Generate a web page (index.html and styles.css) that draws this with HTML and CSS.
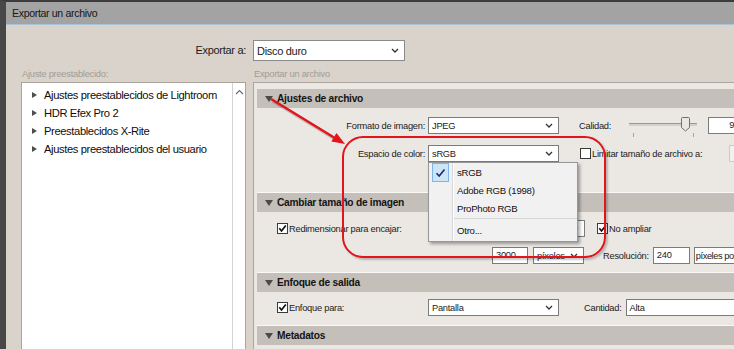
FILE: index.html
```html
<!DOCTYPE html>
<html lang="es">
<head>
<meta charset="UTF-8">
<title>Exportar un archivo</title>
<link rel="stylesheet" href="styles.css">
</head>
<body>
<div class="page">
  <div class="window">
    <div class="title-bar">Exportar un archivo</div>
    <div class="dialog">
      <div class="dest-label">Exportar a:</div>
      <div class="select dest-select">
        <span>Disco duro</span>
        <svg class="chev" width="8" height="5" viewBox="0 0 8 5"><path d="M1 1 L4 4 L7 1" fill="none" stroke="#333" stroke-width="1.3"/></svg>
      </div>

      <div class="group-label">Ajuste preestablecido:</div>
      <div class="group-label">Exportar un archivo</div>

      <div class="preset-list">
        <ul>
          <li>Ajustes preestablecidos de Lightroom</li>
          <li>HDR Efex Pro 2</li>
          <li>Preestablecidos X-Rite</li>
          <li>Ajustes preestablecidos del usuario</li>
        </ul>
        <div class="scrollbar">
          <svg class="scroll-up" width="9" height="6" viewBox="0 0 9 6"><path d="M1 5 L4.5 1.5 L8 5" fill="none" stroke="#6d6d6d" stroke-width="1.2"/></svg>
        </div>
      </div>

      <div class="settings">
        <div class="section-head"><span class="tri"></span>Ajustes de archivo</div>
        <div class="section-body body-file">
          <div class="row">
            <div class="row-label">Formato de imagen:</div>
            <div class="select w131">
              <span>JPEG</span>
              <svg class="chev" width="8" height="5" viewBox="0 0 8 5"><path d="M1 1 L4 4 L7 1" fill="none" stroke="#333" stroke-width="1.3"/></svg>
            </div>
            <div class="text quality-label">Calidad:</div>
            <div class="slider">
              <div class="track"></div>
              <svg class="thumb" width="9" height="15" viewBox="0 0 9 15"><path d="M0.5 1.5 Q0.5 0.5 1.5 0.5 L7.5 0.5 Q8.5 0.5 8.5 1.5 L8.5 10.5 L4.5 14 L0.5 10.5 Z" fill="#e9e7e4" stroke="#6f6f6f"/></svg>
              <span class="tick tick-a"></span>
              <span class="tick tick-b"></span>
            </div>
            <div class="input value-box">9</div>
          </div>
          <div class="row">
            <div class="row-label">Espacio de color:</div>
            <div class="select w131 color-select">
              <span>sRGB</span>
              <svg class="chev" width="8" height="5" viewBox="0 0 8 5"><path d="M1 1 L4 4 L7 1" fill="none" stroke="#333" stroke-width="1.3"/></svg>
              <div class="menu">
                <div class="menu-item checked">
                  <span class="menu-check">
                    <svg width="11" height="10" viewBox="0 0 11 10"><path d="M1.5 5.2 L4.2 8 L9.5 1.5" fill="none" stroke="#1b2c6e" stroke-width="1.6"/></svg>
                  </span>
                  sRGB
                </div>
                <div class="menu-item">Adobe RGB (1998)</div>
                <div class="menu-item">ProPhoto RGB</div>
                <div class="menu-sep"></div>
                <div class="menu-item">Otro...</div>
              </div>
            </div>
            <span class="checkbox limit-check"></span>
            <div class="text">Limitar tamaño de archivo a:</div>
            <div class="input disabled-box"></div>
          </div>
        </div>

        <div class="section-head next"><span class="tri"></span>Cambiar tamaño de imagen</div>
        <div class="section-body body-size">
          <div class="row">
            <div class="check-label">
              <span class="checkbox on"><svg width="9" height="9" viewBox="0 0 9 9"><path d="M1.3 4.3 L3.5 7 L7.8 1.4" fill="none" stroke="#111" stroke-width="1.7"/></svg></span>
              Redimensionar para encajar:
            </div>
            <div class="select w157">
              <span></span>
              <svg class="chev" width="8" height="5" viewBox="0 0 8 5"><path d="M1 1 L4 4 L7 1" fill="none" stroke="#333" stroke-width="1.3"/></svg>
            </div>
            <span class="checkbox on no-enlarge"><svg width="9" height="9" viewBox="0 0 9 9"><path d="M1.3 4.3 L3.5 7 L7.8 1.4" fill="none" stroke="#111" stroke-width="1.7"/></svg></span>
            <div class="text">No ampliar</div>
          </div>
          <div class="row">
            <div class="row-label"></div>
            <div class="input size-box">3000</div>
            <div class="select unit-select">
              <span>píxeles</span>
              <svg class="chev" width="8" height="5" viewBox="0 0 8 5"><path d="M1 1 L4 4 L7 1" fill="none" stroke="#333" stroke-width="1.3"/></svg>
            </div>
            <div class="text res-label">Resolución:</div>
            <div class="input res-box">240</div>
            <div class="select res-unit">
              <span>píxeles po</span>
            </div>
          </div>
        </div>

        <div class="section-head next"><span class="tri"></span>Enfoque de salida</div>
        <div class="section-body body-sharpen">
          <div class="row">
            <div class="check-label">
              <span class="checkbox on"><svg width="9" height="9" viewBox="0 0 9 9"><path d="M1.3 4.3 L3.5 7 L7.8 1.4" fill="none" stroke="#111" stroke-width="1.7"/></svg></span>
              Enfoque para:
            </div>
            <div class="select w131">
              <span>Pantalla</span>
              <svg class="chev" width="8" height="5" viewBox="0 0 8 5"><path d="M1 1 L4 4 L7 1" fill="none" stroke="#333" stroke-width="1.3"/></svg>
            </div>
            <div class="text amount-label">Cantidad:</div>
            <div class="select amount-select">
              <span>Alta</span>
            </div>
          </div>
        </div>

        <div class="section-head next"><span class="tri"></span>Metadatos</div>
      </div>
    </div>
  </div>

  <!-- red markup over the dialog: a rounded frame and an arrow -->
  <div class="markup-frame"></div>
  <svg class="markup-arrow" width="90" height="56" viewBox="265 95 90 56">
    <line x1="273" y1="101" x2="336" y2="139.5" stroke="#000" stroke-opacity="0.18" stroke-width="3.5"/>
    <line x1="271" y1="99" x2="334" y2="137.5" stroke="#e3141b" stroke-width="2.5"/>
    <polygon points="345,144 331.3,141.5 336.5,132.9" fill="#e3141b"/>
  </svg>
</div>
</body>
</html>
```

FILE: styles.css
```css
html, body {
  overflow: hidden;
}

body {
  margin: 0;
  width: 734px;
  height: 349px;
  font-family: "Liberation Sans", Arial, sans-serif;
  font-size: 9.3px;
  letter-spacing: -0.25px;
  color: #1b1b1b;
  background-color: #d9d3cb;
}

.page {
  position: relative;
  width: 734px;
  height: 349px;
  overflow: hidden;
  background-color: #d9d3cb;
}

.window {
  width: 734px;
  height: 349px;
  box-sizing: border-box;
  border-top: 2px solid #3c3c3c;
  border-left: 6px solid #474747;
  background-color: #d9d3cb;
  overflow: hidden;
}

.title-bar {
  width: 728px;
  height: 23px;
  line-height: 22px;
  box-sizing: border-box;
  padding-left: 6px;
  background-color: #a3a3a3;
  border-bottom: 1px solid #a9c4d8;
  font-size: 10.6px;
  letter-spacing: -0.35px;
  color: #161616;
}

.dialog {
  display: grid;
  grid-template-columns: 225px 1fr;
  grid-template-rows: 21px 21px auto;
  column-gap: 7px;
  padding: 15px 0 0 15px;
}

.dest-label {
  text-align: right;
  line-height: 21px;
  font-size: 11px;
  letter-spacing: -0.3px;
}

.select {
  position: relative;
  display: flex;
  align-items: center;
  justify-content: space-between;
  height: 17px;
  box-sizing: border-box;
  padding: 0 5px 0 3px;
  border: 1px solid #7b7b7b;
  background-color: #fff;
  flex: none;
}

.dest-select {
  width: 152px;
  height: 21px;
  font-size: 11px;
  letter-spacing: -0.3px;
  border-color: #8a8a8a;
}

.group-label {
  display: flex;
  align-items: center;
  padding: 4px 0 0 1px;
  color: #a29c95;
}

.preset-list {
  position: relative;
  height: 280px;
  background-color: #fff;
  border: 1px solid #aaa49d;
}

.preset-list ul {
  list-style: none;
  margin: 0;
  padding: 3px 0 0 10px;
}

.preset-list li {
  display: flex;
  align-items: center;
  height: 18px;
  font-size: 11.2px;
  letter-spacing: -0.38px;
  color: #0e0e0e;
  white-space: nowrap;
}

.preset-list li::before {
  content: "";
  width: 0;
  height: 0;
  margin-right: 7px;
  border-left: 5px solid #4d4d4d;
  border-top: 3.5px solid transparent;
  border-bottom: 3.5px solid transparent;
}

.scrollbar {
  position: absolute;
  top: 0;
  right: 0;
  bottom: 0;
  width: 12px;
  border-left: 1px solid #d3d3d3;
}

.scroll-up {
  display: block;
  margin: 6px auto 0;
}

.settings {
  height: 300px;
  min-width: 0;
  overflow: hidden;
  padding: 6px 0 0 3px;
  background-color: #ebe8e4;
  border: 1px solid #aba59e;
  border-right: none;
}

.section-head {
  display: flex;
  align-items: center;
  height: 19px;
  padding-left: 8px;
  background-color: #c5bfb9;
  font-weight: bold;
  font-size: 10.2px;
  letter-spacing: -0.25px;
  color: #141414;
}

.section-head.next {
  border-top: 1px solid #faf9f7;
}

.tri {
  width: 0;
  height: 0;
  margin-right: 4px;
  border-top: 6px solid #4a4a4a;
  border-left: 4px solid transparent;
  border-right: 4px solid transparent;
}

.section-body {
  box-sizing: border-box;
}

.body-file {
  height: 84px;
  padding-top: 9px;
}

.body-file .row + .row {
  margin-top: 11px;
}

.body-size {
  height: 60px;
  padding-top: 8px;
}

.body-size .row + .row {
  margin-top: 10px;
}

.body-sharpen {
  height: 33px;
  padding-top: 7px;
}

.row {
  display: flex;
  align-items: center;
  height: 17px;
  white-space: nowrap;
}

.row-label {
  width: 168px;
  flex: none;
  text-align: right;
}

.row-label + .select {
  margin-left: 3px;
}

.check-label {
  display: flex;
  align-items: center;
  width: 168px;
  flex: none;
  box-sizing: border-box;
  padding-left: 20px;
}

.check-label + .select {
  margin-left: 3px;
}

.checkbox {
  display: flex;
  align-items: center;
  justify-content: center;
  width: 11px;
  height: 11px;
  box-sizing: border-box;
  margin-right: 1px;
  border: 1px solid #3a3a3a;
  background-color: #fff;
  flex: none;
}

.text {
  white-space: nowrap;
}

.w131 {
  width: 131px;
}

.w157 {
  width: 157px;
}

.quality-label {
  margin-left: 20px;
}

.slider {
  position: relative;
  width: 72px;
  height: 17px;
  margin-left: 16px;
  flex: none;
}

.track {
  position: absolute;
  top: 6px;
  left: 2px;
  right: 2px;
  height: 2px;
  background-color: #d4d0cb;
  border-top: 1px solid #9a958f;
}

.thumb {
  position: absolute;
  top: 0;
  left: 54px;
}

.tick {
  position: absolute;
  top: 16px;
  width: 1px;
  height: 4px;
  background-color: #a9a49e;
}

.tick-a {
  left: 6px;
}

.tick-b {
  left: 66px;
}

.input {
  height: 17px;
  box-sizing: border-box;
  border: 1px solid #7b7b7b;
  background-color: #fff;
  line-height: 15px;
  padding-left: 3px;
  flex: none;
  overflow: hidden;
}

.value-box {
  width: 28px;
  margin-left: 9px;
  padding-left: 20px;
  border-right: none;
}

.limit-check {
  margin-left: 21px;
}

.disabled-box {
  width: 7px;
  margin-left: 27px;
  border-color: #cdc9c4;
  border-right: none;
  background-color: #f3f1ee;
}

.menu {
  position: absolute;
  top: 16px;
  left: -1px;
  z-index: 5;
  width: 150px;
  box-sizing: border-box;
  padding-bottom: 2px;
  background-color: #f1f1f1;
  border: 1px solid #979797;
  box-shadow: 2px 2px 3px rgba(0, 0, 0, 0.35);
}

.menu::before {
  content: "";
  position: absolute;
  top: 0;
  bottom: 0;
  left: 23px;
  width: 1px;
  background-color: #d7d7d7;
  border-right: 1px solid #fff;
}

.menu-item {
  position: relative;
  display: flex;
  align-items: center;
  height: 18px;
  padding-left: 28px;
  font-size: 9.6px;
  color: #111;
}

.menu-check {
  position: absolute;
  top: 0;
  left: 3px;
  display: flex;
  align-items: center;
  justify-content: center;
  width: 17px;
  height: 19px;
  box-sizing: border-box;
  border: 1px solid #7eb4ea;
  background-color: #cde6f7;
}

.menu-sep {
  height: 3px;
  margin-left: 24px;
  border-top: 1px solid #d7d7d7;
  box-sizing: border-box;
  margin-top: 1px;
}

.no-enlarge {
  margin-left: 12px;
}

.size-box {
  width: 36px;
  margin-left: 67px;
  color: #1b1b3a;
}

.unit-select {
  width: 51px;
  margin-left: 5px;
  color: #1b1b3a;
}

.res-label {
  margin-left: 19px;
}

.res-box {
  width: 37px;
  margin-left: 4px;
}

.res-unit {
  width: 42px;
  margin-left: 4px;
  padding-left: 1px;
  justify-content: flex-start;
  border-right: none;
  letter-spacing: -0.45px;
  overflow: hidden;
}

.amount-label {
  margin-left: 25px;
}

.amount-select {
  width: 108px;
  margin-left: 4px;
  justify-content: flex-start;
  border-right: none;
}

.markup-frame {
  position: absolute;
  left: 342px;
  top: 136px;
  width: 264px;
  height: 122px;
  box-sizing: border-box;
  border: 2.5px solid #e3141b;
  border-radius: 21px;
  box-shadow: 2px 2px 2px rgba(0, 0, 0, 0.22);
  pointer-events: none;
}

.markup-arrow {
  position: absolute;
  left: 265px;
  top: 95px;
  pointer-events: none;
}
```
